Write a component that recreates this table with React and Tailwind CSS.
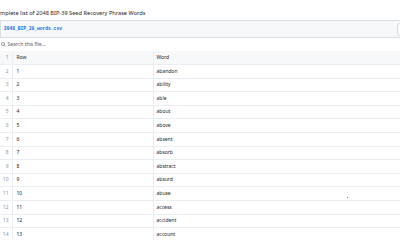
const words = [
	'abandon',
	'ability',
	'able',
	'about',
	'above',
	'absent',
	'absorb',
	'abstract',
	'absurd',
	'abuse',
	'access',
	'accident',
	'account',
];

function SearchIcon() {
	return (
		<svg width="5" height="5" viewBox="0 0 16 16" fill="none" stroke="#59636e" strokeWidth="2">
			<circle cx="6.5" cy="6.5" r="5" />
			<path d="M10.5 10.5 15 15" />
		</svg>
	);
}

export default function App() {
	return (
		<div className="relative w-[400px] h-[240px] overflow-hidden bg-white font-['Noto_Sans','Liberation_Sans',sans-serif] text-[#1f2328]">
			<div className="pt-[9px] pb-[3px] ml-[-7px] text-[5.65px] leading-[9px]">
				Complete list of 2048 BIP-39 Seed Recovery Phrase Words
			</div>

			<div className="flex items-center justify-between h-[18px] mt-[-1px] border-y border-l border-[#d8dee4] bg-[#f6f8fa]">
				<span className="pl-[3px] font-['Liberation_Mono',monospace] font-bold text-[4.6px] text-[#0969da]">
					2048_BIP_39_words.csv
				</span>
				<span className="mr-[-11px] h-[13px] w-[14px] rounded-[3px] border border-[#d0d7de] bg-white" />
			</div>

			<div className="flex items-center gap-[1.5px] h-[13px] pl-[1px] text-[5px] text-[#59636e]">
				<SearchIcon />
				<span>Search this file...</span>
			</div>

			<table className="w-[400px] border-collapse text-[5px] text-[#1f2328]">
				<tbody>
					<tr className="h-[13.6px] bg-[#f6f8fa]">
						<td className="w-[12px] pr-[3px] text-right text-[#8c959f] border-r border-[#eaeef2]">1</td>
						<td className="w-[141px] pl-[4px] border-r border-[#eaeef2]">Row</td>
						<td className="pl-[3px]">Word</td>
					</tr>
					{words.map((w, i) => (
						<tr key={w} className="h-[13.6px] border-t border-[#eaeef2]">
							<td className="w-[12px] pr-[3px] text-right text-[#8c959f] border-r border-[#eaeef2]">{i + 2}</td>
							<td className="w-[141px] pl-[4px] border-r border-[#eaeef2]">{i + 1}</td>
							<td className="pl-[3px]">{w}</td>
						</tr>
					))}
				</tbody>
			</table>

			<span className="absolute left-[347px] top-[197px] h-[1px] w-[1px] bg-[#e5484d]" />
		</div>
	);
}
